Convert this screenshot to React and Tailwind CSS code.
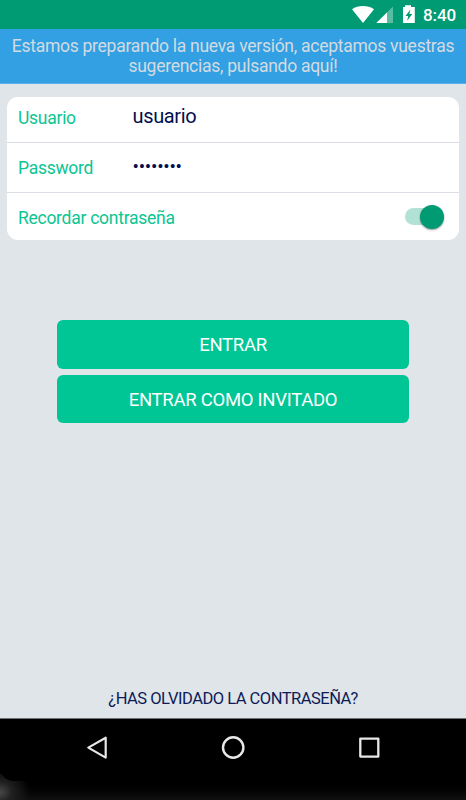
import { useState } from 'react';

function StatusBar() {
  return (
    <div className="h-[29px] bg-[#009a73] flex items-center justify-end text-white">
      <svg width="68" height="29" viewBox="0 0 68 29" fill="#fff">
        {/* wifi */}
        <path d="M4 9.3C10 4.9 20 4.9 26 9.3L15 23Z" />
        {/* signal */}
        <path d="M45 6.5V23H28.3Z" opacity="0.35" />
        <path d="M39 12.5V23H28.3Z" />
        {/* battery */}
        <path fillRule="evenodd" d="M57 5.3H63V7H66.8V23H55V7H57ZM62.4 9.5L57.5 16H60.2L59.2 20.8L64.3 14H61.4Z" />
      </svg>
      <span className="ml-[7px] mr-[9px] w-[34px] text-[17px] leading-[20px] font-medium whitespace-nowrap tracking-[-0.1px] pt-[1px]">8:40</span>
    </div>
  );
}

function NavBar() {
  return (
    <div className="relative h-[82px] bg-black border-t border-[#6f7274] overflow-hidden">
      <div className="absolute inset-x-0 bottom-0 h-[24px] bg-gradient-to-b from-black to-[#111011]" />
      <div className="absolute left-0 bottom-0 w-[60px] h-[26px] bg-[radial-gradient(ellipse_30px_26px_at_0%_70%,#484848_0%,#202020_40%,transparent_100%)]" />
      <div className="absolute left-0 top-0 w-[60px] h-[62px] bg-black rounded-bl-[14px]" />
      <div className="relative flex justify-between pl-[85px] pr-[85px] pt-[16px]">
        <svg width="24" height="26" viewBox="0 0 24 26" fill="none" stroke="#e8e8e8" strokeWidth="2.2" strokeLinejoin="round">
          <path d="M3.3 12.6L20.7 2.7V22.6Z" />
        </svg>
        <svg width="24" height="26" viewBox="0 0 24 26" fill="none" stroke="#e8e8e8" strokeWidth="2.4">
          <circle cx="12.2" cy="12.5" r="10.2" />
        </svg>
        <svg width="24" height="26" viewBox="0 0 24 26" fill="none" stroke="#e8e8e8" strokeWidth="2.3" strokeLinejoin="round">
          <rect x="3.3" y="3.6" width="18" height="18" />
        </svg>
      </div>
    </div>
  );
}

export default function App() {
  const [remember, setRemember] = useState(true);

  return (
    <div className="w-[466px] h-[800px] flex flex-col bg-[#e0e5e9] font-['Roboto',sans-serif] overflow-hidden">
      <StatusBar />

      {/* Banner */}
      <div className="h-[55px] bg-[#32a0e3] border-b border-[#5bb1e6] pt-[7px] text-center text-[#d3dbe2] text-[17.5px] leading-[20px] tracking-[-0.27px] whitespace-nowrap">
        <p>Estamos preparando la nueva versión, aceptamos vuestras</p>
        <p>sugerencias, pulsando aquí!</p>
      </div>

      {/* Login form */}
      <div className="mt-[13px] ml-[7px] mr-[7px] h-[143px] bg-white rounded-[11px] text-[17.5px] tracking-[-0.27px] text-[#0bc592]">
        <div className="h-[46px] flex border-b border-[#dcdee6] pl-[11px]">
          <label className="w-[114.5px] pt-[11px] leading-[20px]">Usuario</label>
          <span className="pt-[8px] text-[20px] leading-[22px] tracking-[-0.35px] text-[#020f4f]">usuario</span>
        </div>
        <div className="h-[50px] flex border-b border-[#dcdee6] pl-[11px]">
          <label className="w-[114.5px] pt-[15px] leading-[20px]">Password</label>
          <span className="pt-[13px] text-[19px] leading-[22px] tracking-[-0.25px] text-[#020f4f]">••••••••</span>
        </div>
        <div className="h-[47px] flex justify-between pl-[11px] pr-[15px]">
          <label className="pt-[15px] leading-[20px]">Recordar contraseña</label>
          <button className="w-[39px] h-[17px] mt-[15px]" onClick={() => setRemember(!remember)}>
            <span className={`flex items-center h-[17px] rounded-full bg-[#b2e1d5] ${remember ? 'justify-end' : 'justify-start'}`}>
              <span className="size-[24px] rounded-full bg-[#009a73] shadow-[0_1px_2px_rgba(0,0,0,0.4)]" />
            </span>
          </button>
        </div>
      </div>

      {/* Buttons */}
      <div className="mt-[80px] mx-[57px] flex flex-col gap-[6px] text-white text-[18.5px] tracking-[-0.28px]">
        <button className="h-[49px] rounded-[6px] bg-[#00c695] pt-[3px]">ENTRAR</button>
        <button className="h-[48px] rounded-[6px] bg-[#00c695] pt-[3px]">ENTRAR COMO INVITADO</button>
      </div>

      <a className="mt-auto mb-[9px] text-center text-[16.5px] leading-[20px] tracking-[-0.5px] text-[#0d1c58]">¿HAS OLVIDADO LA CONTRASEÑA?</a>

      <NavBar />
    </div>
  );
}
